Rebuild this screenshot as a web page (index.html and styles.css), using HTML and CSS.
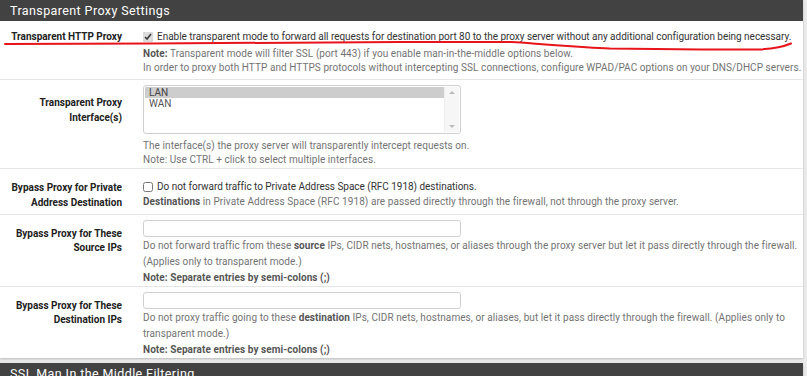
FILE: index.html
```html
<!DOCTYPE html>
<html>
	<head>
		<meta charset="utf-8">
		<title>Squid Proxy Server: General Settings</title>
		<link rel="stylesheet" href="styles.css">
	</head>
	<body>
		<!-- Transparent proxy panel -->
		<div class="panel">
			<div class="panel-heading">Transparent Proxy Settings</div>
			<div class="panel-body">
				<div class="form-row row-first">
					<div class="form-label">Transparent HTTP Proxy</div>
					<div class="form-field">
						<label class="check"><input type="checkbox" checked> Enable transparent mode to forward all requests for destination port 80 to the proxy server without any additional configuration being necessary.</label>
						<div class="help tight"><b>Note:</b> Transparent mode will filter SSL (port 443) if you enable man-in-the-middle options below.<br>In order to proxy both HTTP and HTTPS protocols without intercepting SSL connections, configure WPAD/PAC options on your DNS/DHCP servers.</div>
					</div>
				</div>
				<div class="form-row row-select">
					<div class="form-label">Transparent Proxy<br>Interface(s)</div>
					<div class="form-field">
						<div class="listbox">
							<div class="options">
								<div class="option selected">LAN</div>
								<div class="option">WAN</div>
							</div>
							<div class="scrollbar">
								<span class="arrow up"></span>
								<span class="arrow down"></span>
							</div>
						</div>
						<div class="help tight">The interface(s) the proxy server will transparently intercept requests on.<br>Note: Use CTRL + click to select multiple interfaces.</div>
					</div>
				</div>
				<div class="form-row row-check">
					<div class="form-label">Bypass Proxy for Private<br>Address Destination</div>
					<div class="form-field">
						<label class="check"><input type="checkbox"> Do not forward traffic to Private Address Space (RFC 1918) destinations.</label>
						<div class="help"><b>Destinations</b> in Private Address Space (RFC 1918) are passed directly through the firewall, not through the proxy server.</div>
					</div>
				</div>
				<div class="form-row row-input">
					<div class="form-label">Bypass Proxy for These<br>Source IPs</div>
					<div class="form-field">
						<input class="text-input" type="text">
						<div class="help">Do not forward traffic from these <b>source</b> IPs, CIDR nets, hostnames, or aliases through the proxy server but let it pass directly through the firewall. (Applies only to transparent mode.)<br><b>Note: Separate entries by semi-colons (;)</b></div>
					</div>
				</div>
				<div class="form-row row-input">
					<div class="form-label">Bypass Proxy for These<br>Destination IPs</div>
					<div class="form-field">
						<input class="text-input" type="text">
						<div class="help">Do not proxy traffic going to these <b>destination</b> IPs, CIDR nets, hostnames, or aliases, but let it pass directly through the firewall. (Applies only to transparent mode.)<br><b>Note: Separate entries by semi-colons (;)</b></div>
					</div>
				</div>
			</div>
			<!-- hand-drawn mark under the first row -->
			<svg class="mark" width="807" height="60" viewBox="0 0 807 60">
				<path d="M5 44 L150 43.5 L400 42 L512 42 C530 43 560 46 610 48.5 L700 49.5 L760 49.5 C775 48.5 785 46 791 43.5" fill="none" stroke="#e8141b" stroke-width="2" stroke-linecap="round"/>
			</svg>
		</div>
		<div class="panel">
			<div class="panel-heading">SSL Man In the Middle Filtering</div>
		</div>
	</body>
</html>
```

FILE: styles.css
```css
/* page */
body {
	margin: 0;
	padding-right: 4px;
	background: #e9e9e9;
	font-family: Roboto, "Liberation Sans", sans-serif;
	font-size: 10px;
	color: #212121;
}

/* panel */
.panel {
	position: relative;
	background: white;
	margin-bottom: 5px;
	box-shadow: 0 1px 2px rgba(0,0,0,0.2);
}
.panel-heading {
	height: 21px;
	line-height: 21px;
	padding-left: 10px;
	background: #424242;
	color: white;
	font-size: 12.5px;
	letter-spacing: 0.4px;
}
.mark {
	position: absolute;
	top: 0;
	left: 0;
	pointer-events: none;
}

/* form rows */
.form-row {
	display: grid;
	grid-template-columns: 122px 1fr;
	column-gap: 21px;
	border-bottom: 1px solid #e6e6e6;
}
.form-row:last-child {
	border-bottom: none;
}
.form-label {
	text-align: right;
	font-weight: bold;
	line-height: 15px;
	color: #212121;
}
.row-first {
	padding: 9px 0 4px;
}
.row-first .form-label {
	line-height: 14px;
}
.row-select {
	padding: 5px 0 1px;
}
.row-select .form-label {
	padding-top: 10px;
}
.row-check {
	padding: 11px 0 4px;
}
.row-input {
	padding: 5px 0 0;
}
.row-input .form-label {
	padding-top: 7px;
	line-height: 14px;
}

/* controls */
.check {
	display: flex;
	align-items: center;
	gap: 4px;
	line-height: 14px;
	color: #333;
	letter-spacing: -0.03px;
}
.check input {
	width: 10px;
	height: 10px;
	margin: 0;
	accent-color: #dcdcdc;
}
.help {
	color: #737373;
	line-height: 16px;
	letter-spacing: 0.07px;
}
.help.tight {
	line-height: 14px;
	margin-top: 3px;
}
.help b {
	color: #555;
}
.row-select .help {
	margin-top: 5px;
}
.text-input {
	display: block;
	box-sizing: border-box;
	width: 318px;
	height: 17px;
	margin: 0 0 1px;
	border: 1px solid #d0d0d0;
	border-radius: 3px;
	background: white;
}
.listbox {
	display: flex;
	box-sizing: border-box;
	width: 318px;
	height: 49px;
	border: 1px solid #d0d0d0;
	border-radius: 3px;
	padding: 1px;
}
.options {
	flex: 1;
	line-height: 11px;
	font-size: 10px;
	color: #555;
}
.option {
	padding-left: 4px;
}
.option.selected {
	background: #cdcdcd;
	color: #444;
}
.scrollbar {
	position: relative;
	width: 14px;
	background: #f6f6f6;
	border-left: 1px solid #eee;
}
.arrow {
	position: absolute;
	left: 4px;
	border-left: 3px solid transparent;
	border-right: 3px solid transparent;
}
.arrow.up {
	top: 4px;
	border-bottom: 3px solid #bbb;
}
.arrow.down {
	bottom: 4px;
	border-top: 3px solid #bbb;
}
```
